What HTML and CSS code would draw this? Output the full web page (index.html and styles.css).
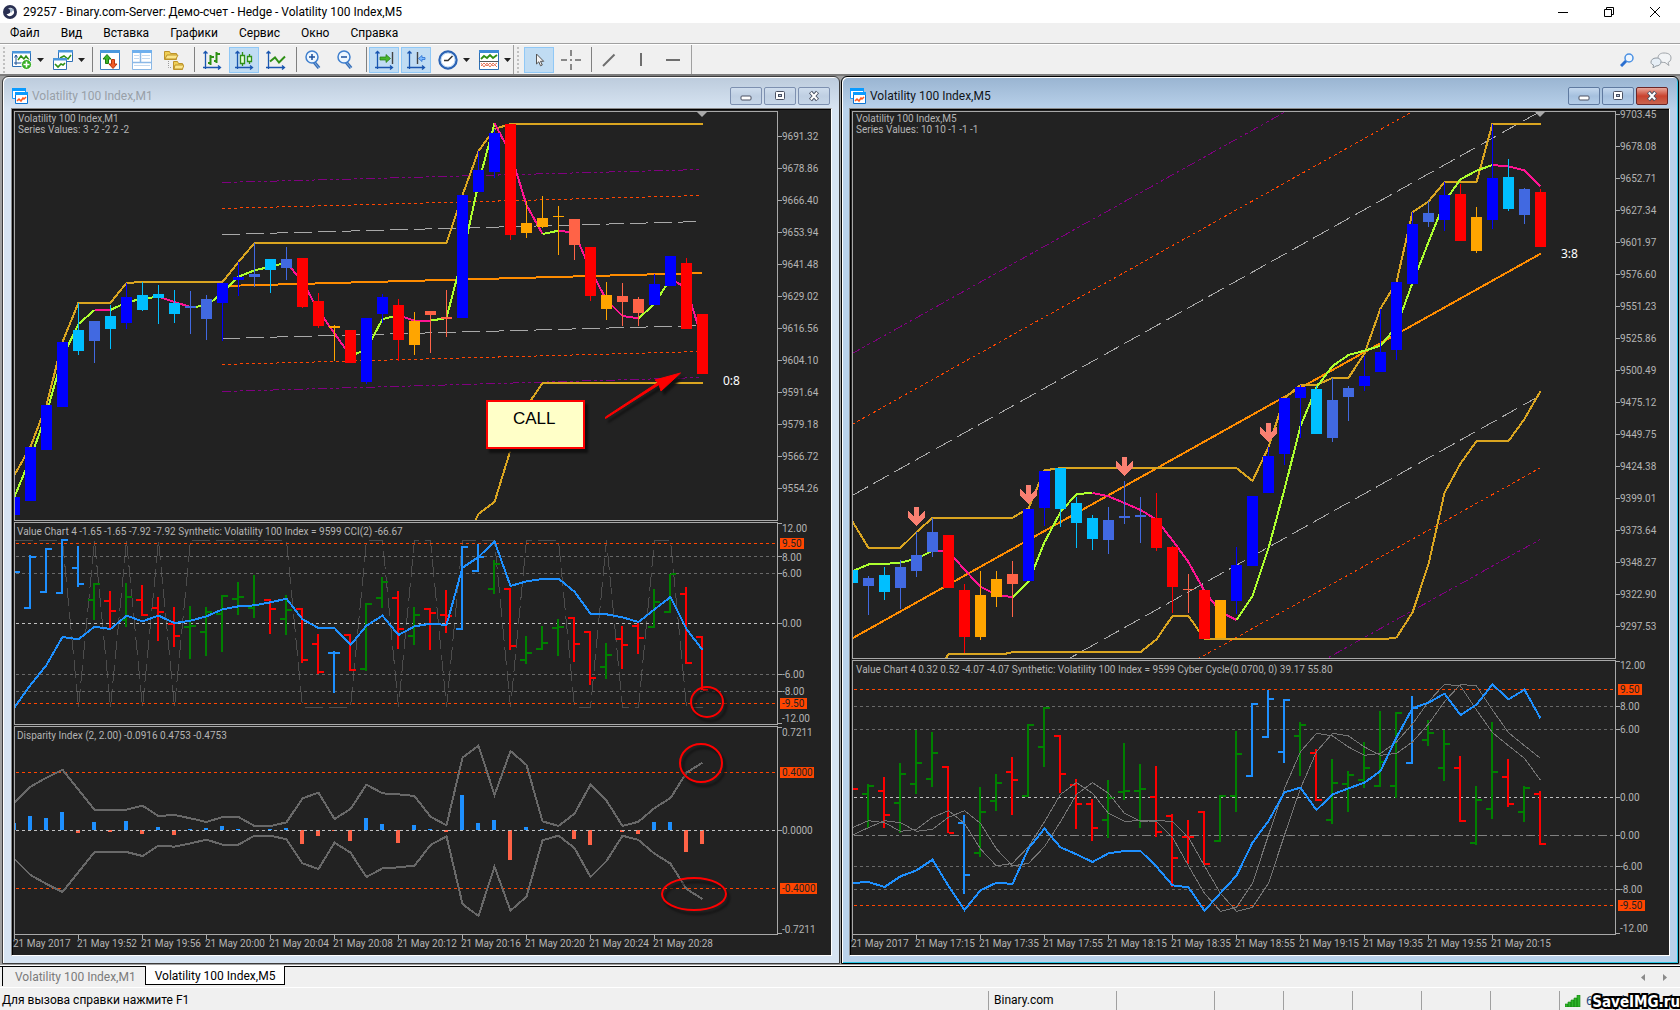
FILE: index.html
```html
<!DOCTYPE html>
<html lang="ru">
<head>
<meta charset="utf-8">
<title>29257 - Binary.com-Server: Демо-счет - Hedge - Volatility 100 Index,M5</title>
<link rel="stylesheet" href="styles.css">
</head>
<body>
<svg class="defs" aria-hidden="true">
  <symbol id="i-chartwin" viewBox="0 0 16 16">
    <path d="M0.5 0.5h13v10h-13z" fill="#fff" stroke="#1c9cff"/><path d="M0 0h14v3H0z" fill="#0a9bff"/>
    <path d="M3.500 4.500h12v11h-12z" fill="#fff" stroke="#0b74d4"/><path d="M3 4h13v3H3z" fill="#0a9bff"/>
    <path d="M5 13l2-2 2 2 2-3 1 1 2-2" fill="none" stroke="#ff5a1e" stroke-width="1.500"/>
  </symbol>
  <symbol id="i-min" viewBox="0 0 12 12"><rect x="1" y="6" width="10" height="4" rx="1" fill="#fff" stroke="#4a5163"/></symbol>
  <symbol id="i-max" viewBox="0 0 12 12"><rect x="1.500" y="1.500" width="9" height="8" rx="1" fill="#fff" stroke="#4a5163"/><rect x="4.500" y="4.500" width="3" height="2" fill="#b8c8dc" stroke="#4a5163"/></symbol>
  <symbol id="i-x" viewBox="0 0 12 12"><path d="M2.500 2l7 8M9.500 2l-7 8" stroke="#4a5163" stroke-width="4"/><path d="M2.800 2.500l6.400 7M9.200 2.500l-6.400 7" stroke="#fff" stroke-width="2"/></symbol>
  <symbol id="i-caret" viewBox="0 0 7 4"><path d="M0 0h7L3.500 4z" fill="#222"/></symbol>
</svg>

<header class="titlebar">
  <svg class="logo" width="14" height="14" viewBox="0 0 14 14"><circle cx="7" cy="7" r="7" fill="#2a3052"/><path d="M3.500 9A4 4 0 1 0 5 3.500C8 4 8.500 7 6 8.500 5 9 4 9 3.500 9z" fill="#fff"/><path d="M6 3l5 1-3 4z" fill="#9fb3c8"/></svg>
  <h1>29257 - Binary.com-Server: Демо-счет - Hedge - Volatility 100 Index,M5</h1>
  <div class="sysbtns">
    <button aria-label="Свернуть"><svg width="12" height="12"><path d="M1 6.500h10" stroke="#000"/></svg></button>
    <button aria-label="Восстановить"><svg width="12" height="12" fill="none" stroke="#000"><path d="M1.500 3.500h7v7h-7zM3.500 3.500v-2h7v7h-2"/></svg></button>
    <button aria-label="Закрыть"><svg width="12" height="12"><path d="M1 1l10 10M11 1L1 11" stroke="#000"/></svg></button>
  </div>
</header>

<nav class="menu">
  <a href="#">Файл</a><a href="#">Вид</a><a href="#">Вставка</a><a href="#">Графики</a><a href="#">Сервис</a><a href="#">Окно</a><a href="#">Справка</a>
</nav>

<div class="toolbar">
  <div class="bar">
    <i class="grip"></i>
    <button class="drop" aria-label="Новый график"><svg width="20" height="20" viewBox="0 0 20 20"><path d="M.5 1.500h18v15H.5z" fill="#fff" stroke="#2d6fb5"/><path d="M0 1h19v2.500H0z" fill="#4a97dc"/><path d="M4 5v10M2 13h10M2.500 7.500L4 5l1.500 2.500" fill="none" stroke="#1a5296"/><path d="M6 10l3-4 3 3 2-3 3 4" fill="none" stroke="#2f9016" stroke-width="1.500"/><circle cx="14.500" cy="14.500" r="5" fill="#35ad22" stroke="#fff"/><path d="M14.500 11.500v6M11.500 14.500h6" stroke="#fff" stroke-width="1.600"/></svg><svg width="7" height="4"><use href="#i-caret"/></svg></button>
    <button class="drop" aria-label="Профили"><svg width="20" height="20" viewBox="0 0 20 20"><path d="M5.500.5h14v11h-14z" fill="#fff" stroke="#2d6fb5"/><path d="M5 0h15v2.500H5z" fill="#4a97dc"/><path d="M7 8l4-2 4 3 3-4" fill="none" stroke="#2f9016" stroke-width="1.500"/><path d="M.5 8.500h13v11H.5z" fill="#fff" stroke="#2d6fb5"/><path d="M0 8h14v2.500H0z" fill="#4a97dc"/><path d="M2 14l3 3 3-3 2 1 2-2" fill="none" stroke="#2f9016" stroke-width="1.700"/></svg><svg width="7" height="4"><use href="#i-caret"/></svg></button>
    <i class="sep"></i>
    <button aria-label="Обзор рынка"><svg width="20" height="20" viewBox="0 0 20 20"><path d="M.5.5h19v19H.5z" fill="#fff" stroke="#3c7fc2"/><path d="M0 0h20v3H0z" fill="#4a97dc"/><path d="M7 4.500l4 4.500H8.500v4.500h-3V9H3z" fill="#3bb428" stroke="#1d7a10"/><path d="M13 18.500l4-4.500h-2.500V9.500h-3V14H9z" fill="#f25c27" stroke="#b8350c"/></svg></button>
    <button aria-label="Окно данных"><svg width="20" height="20" viewBox="0 0 20 20"><path d="M.5.5h19v19H.5z" fill="#fff" stroke="#8ab8e6"/><path d="M0 0h20v3H0z" fill="#6fb0ee"/><path d="M.5 12.500h19M8.500 3v9" stroke="#8ab8e6" stroke-width="1.500"/><path d="M2 5.500h5M2 8.500h5M10 5.500h8M10 8.500h8M2 15.500h16" stroke="#c4daf0"/></svg></button>
    <button aria-label="Навигатор"><svg width="20" height="20" viewBox="0 0 20 20"><path d="M.5 1.500h5l1 2h6v6H.5z" fill="#f0cf55" stroke="#bd932a"/><path d="M1 9l2-4h11l-2 4z" fill="#fbe68a" stroke="#bd932a"/><path d="M4.500 11v6.500H8" fill="none" stroke="#999" stroke-dasharray="1 1"/><path d="M9.500 11.500h4l1 2h4v6h-9z" fill="#f0cf55" stroke="#bd932a"/><path d="M10 19l1-4h9l-1.500 4z" fill="#fbe68a" stroke="#bd932a"/></svg></button>
    <i class="sep"></i>
    <button aria-label="Бары"><svg width="20" height="20" viewBox="0 0 20 20"><path d="M3.500 1v18M1 17.500h17M1.500 3.500l2-2 2 2M16 15.500l2.500 2-2.500 2" fill="none" stroke="#1a56b0" stroke-width="1.300"/><path d="M8.500 5v10M6 13h2.500M8.500 7H12M14.500 2v11M12 11h2.500M14.500 4H18" fill="none" stroke="#2f9016" stroke-width="2"/></svg></button>
    <button class="on" aria-label="Свечи"><svg width="20" height="20" viewBox="0 0 20 20"><path d="M3.500 1v18M1 17.500h17M1.500 3.500l2-2 2 2M16 15.500l2.500 2-2.500 2" fill="none" stroke="#1a56b0" stroke-width="1.300"/><path d="M8.500 2v14M15.500 4v10" stroke="#2f9016" stroke-width="1.300"/><path d="M6.500 5.500h4v8h-4zM13.500 6.500h4v5h-4z" fill="#e6ffd8" stroke="#2f9016" stroke-width="1.300"/></svg></button>
    <button aria-label="Линия"><svg width="20" height="20" viewBox="0 0 20 20"><path d="M2.500 1v18M0 17.500h18M.5 3.500l2-2 2 2M16 15.500l2.500 2-2.500 2" fill="none" stroke="#1a56b0" stroke-width="1.300"/><path d="M4 11.500l5-4 4 5 6-6" fill="none" stroke="#2f9016" stroke-width="2"/></svg></button>
    <i class="sep"></i>
    <button aria-label="Увеличить"><svg width="20" height="20" viewBox="0 0 20 20"><path d="M10 12l5 6" stroke="#3a6fb5" stroke-width="3.500"/><path d="M10 12l5 6" stroke="#7fb0e8" stroke-width="1"/><circle cx="8" cy="7" r="6" fill="#eef7ff" stroke="#3f7fce" stroke-width="1.500"/><path d="M8 4v6M5 7h6" stroke="#1b4f9c" stroke-width="1.500"/></svg></button>
    <button aria-label="Уменьшить"><svg width="20" height="20" viewBox="0 0 20 20"><path d="M10 12l5 6" stroke="#3a6fb5" stroke-width="3.500"/><path d="M10 12l5 6" stroke="#7fb0e8" stroke-width="1"/><circle cx="8" cy="7" r="6" fill="#eef7ff" stroke="#3f7fce" stroke-width="1.500"/><path d="M5 7h6" stroke="#1b4f9c" stroke-width="1.500"/></svg></button>
    <i class="sep"></i>
    <button class="on" aria-label="Автопрокрутка"><svg width="20" height="20" viewBox="0 0 20 20"><path d="M3.500 1v18M1 17.500h17M1.500 3.500l2-2 2 2M16 15.500l2.500 2-2.500 2" fill="none" stroke="#1a56b0" stroke-width="1.300"/><path d="M18.500 2v12" stroke="#444" stroke-width="1.400"/><path d="M6 7h6V4.500L16.500 8.500 12 12.500V10H6z" fill="#46b52d" stroke="#237a12" stroke-width=".7"/></svg></button>
    <button class="on" aria-label="Сдвиг графика"><svg width="20" height="20" viewBox="0 0 20 20"><path d="M3.500 1v18M1 17.500h17M1.500 3.500l2-2 2 2M16 15.500l2.500 2-2.500 2" fill="none" stroke="#1a56b0" stroke-width="1.300"/><path d="M11.500 2v12" stroke="#444" stroke-width="1.400"/><path d="M19 7.500h-3V5.500l-3.500 3 3.500 3v-2h3z" fill="#7fbcff" stroke="#2a6fd0" stroke-width=".8"/></svg></button>
    <button class="drop" aria-label="Периоды"><svg width="20" height="20" viewBox="0 0 20 20"><circle cx="10" cy="10" r="8.500" fill="#fff" stroke="#2b63b4" stroke-width="2.400"/><circle cx="10" cy="10" r="7" fill="none" stroke="#b5d4f4"/><path d="M14.500 6L10 10.500H6" fill="none" stroke="#333" stroke-width="1.500"/></svg><svg width="7" height="4"><use href="#i-caret"/></svg></button>
    <button class="drop" aria-label="Шаблоны"><svg width="20" height="20" viewBox="0 0 20 20"><path d="M.5.5h19v19H.5z" fill="#fff" stroke="#2d6fb5"/><path d="M0 0h20v3H0z" fill="#3d8ad6"/><path d="M2 9l3-3 3 2 3-3 3 3 4-3" fill="none" stroke="#2f9016" stroke-width="1.800"/><path d="M.5 11.500h19" stroke="#555"/><path d="M2 16l3-3 3 3 3-3 3 3 4-3M2 13l3 4 3-4 3 4 3-4 4 4" fill="none" stroke="#e8775c"/></svg><svg width="7" height="4"><use href="#i-caret"/></svg></button>
  </div>
  <div class="bar">
    <i class="grip"></i>
    <button class="on" aria-label="Курсор"><svg width="20" height="20" viewBox="0 0 20 20"><path d="M7.500 4v10l2.300-2.200 1.700 4 1.800-.8-1.800-3.700h3.200z" fill="#f4f4f4" stroke="#555"/></svg></button>
    <button aria-label="Перекрестие"><svg width="20" height="20" viewBox="0 0 20 20"><path d="M10 0v6M10 14v6M0 10h6M14 10h6M9 10h2" stroke="#666" stroke-width="1.500"/></svg></button>
    <i class="sep"></i>
    <button aria-label="Трендовая линия"><svg width="20" height="20" viewBox="0 0 20 20"><path d="M4 16L15.500 4.500" stroke="#6e6e6e" stroke-width="2"/></svg></button>
    <button aria-label="Вертикальная линия"><svg width="20" height="20" viewBox="0 0 20 20"><path d="M10 3v13" stroke="#6e6e6e" stroke-width="2"/></svg></button>
    <button aria-label="Горизонтальная линия"><svg width="20" height="20" viewBox="0 0 20 20"><path d="M3 10h14" stroke="#6e6e6e" stroke-width="2"/></svg></button>
  </div>
  <div class="bar-end">
    <button aria-label="Поиск"><svg width="14" height="14" viewBox="0 0 14 14"><circle cx="9" cy="5" r="4" fill="#eef6ff" stroke="#4a90e2" stroke-width="1.500"/><path d="M6 8l-5 5" stroke="#2a6fd0" stroke-width="3"/></svg></button>
    <button aria-label="Чат"><svg width="22" height="16" viewBox="0 0 22 16"><path d="M14 1c5 0 7 2 7 5s-2 4-3 4.500l1 3-4-3c-5 0-7-1.500-7-4.500s2-5 6-5z" fill="#f2f4f6" stroke="#a0a5aa"/><path d="M6 6c4 0 5 2 5 4s-2 4-5 4l-3 2 .500-3C1 12 1 11 1 10c0-2 2-4 5-4z" fill="#e6eef6" stroke="#9098a0"/></svg></button>
  </div>
</div>

<main class="mdi">
  <section class="win">
    <header>
      <svg width="16" height="16"><use href="#i-chartwin"/></svg><h2>Volatility 100 Index,M1</h2>
      <button aria-label="Свернуть"><svg width="12" height="12"><use href="#i-min"/></svg></button><button aria-label="Развернуть"><svg width="12" height="12"><use href="#i-max"/></svg></button><button aria-label="Закрыть"><svg width="12" height="12"><use href="#i-x"/></svg></button>
    </header>
    <div class="client" id="m1"></div>
  </section>
  <section class="win active">
    <header>
      <svg width="16" height="16"><use href="#i-chartwin"/></svg><h2>Volatility 100 Index,M5</h2>
      <button aria-label="Свернуть"><svg width="12" height="12"><use href="#i-min"/></svg></button><button aria-label="Развернуть"><svg width="12" height="12"><use href="#i-max"/></svg></button><button class="close" aria-label="Закрыть"><svg width="12" height="12"><use href="#i-x"/></svg></button>
    </header>
    <div class="client" id="m5"></div>
  </section>
</main>

<nav class="tabs">
  <a href="#m1">Volatility 100 Index,M1</a><a href="#m5" class="current">Volatility 100 Index,M5</a>
  <div class="scroll"><button aria-label="Назад"><svg width="4" height="7"><path d="M4 0v7L0 3.500z" fill="#8a8a8a"/></svg></button><button aria-label="Вперед"><svg width="4" height="7"><path d="M0 0v7l4-3.500z" fill="#8a8a8a"/></svg></button></div>
</nav>

<footer class="status">
  <span class="hint">Для вызова справки нажмите F1</span>
  <span class="c1">Binary.com</span><span class="c2"></span><span class="c3"></span><span class="c3"></span><span class="c3"></span><span class="c3"></span><span class="c3"></span>
  <span class="net"><svg width="16" height="12" viewBox="0 0 16 12"><path d="M0 9h3v3H0zM3 7h3v5H3zM6 5h3v7H6zM9 3h3v9H9zM12 0h3v12h-3z" fill="#2eb52a" stroke="#14850f" stroke-width=".6"/></svg>67/0 Kb</span>
  <b class="mark">SaveIMG.ru</b>
</footer>
<script src="charts.js"></script>
</body>
</html>
```
FILE: styles.css
```css
* { box-sizing: border-box; }
body {
  margin: 0;
  min-height: 100vh;
  display: flex;
  flex-direction: column;
  background: #f0f0f0;
  color: #000;
  font: 12px/16px Roboto, "Noto Sans", sans-serif;
}
button { padding: 0; border: 0; background: none; font: inherit; display: flex; align-items: center; justify-content: center; }
h1, h2 { margin: 0; font-size: 12px; font-weight: 400; }
a { color: inherit; text-decoration: none; }
svg { display: block; flex: none; }
.defs { width: 0; height: 0; position: absolute; }

.titlebar { display: flex; align-items: center; height: 23px; padding-left: 3px; gap: 6px; background: #fff; }
.titlebar h1 { flex: 1; }
.sysbtns { display: flex; margin-right: 2px; }
.sysbtns button { width: 46px; height: 20px; }

.menu { display: flex; gap: 21px; height: 21px; padding: 2px 10px; border-bottom: 1px solid #a0a0a0; }

.toolbar { display: flex; height: 32px; border-top: 1px solid #fff; border-bottom: 2px solid #7c7c7c; }
.bar { display: flex; align-items: center; gap: 2px; border-right: 1px solid #a0a0a0; }
.bar + .bar { padding-right: 3px; }
.bar + .bar .grip { margin-right: 3px; }
.grip { width: 5px; height: 26px; border-right: 2px dotted #c0c0c0; }
.sep { width: 4px; height: 25px; border-right: 1px solid #808080; }
.bar button { width: 30px; height: 26px; border: 1px solid transparent; }
.bar button.drop { width: 39px; gap: 5px; justify-content: flex-end; padding-right: 1px; }
.bar button.on { background: #c0dcf3; border-color: #90c8f6; }
.bar-end { display: flex; align-items: center; gap: 16px; margin-left: auto; padding-right: 8px; }

.mdi { flex: 1; display: grid; grid-template-columns: 1fr 1fr; gap: 1px; padding: 0 1px 1px 2px; background: #a0a0a0; }
.win {
  display: flex;
  flex-direction: column;
  min-width: 0;
  padding: 0 7px 7px 8px;
  border: 1px solid #3c3c3c;
  border-radius: 6px 6px 0 0;
  background: linear-gradient(#bccbdc, #d7e4f2 32px);
  box-shadow: inset 1px 1px #fff;
}
.win.active {
  padding-left: 7px;
  padding-right: 8px;
  border-color: #000;
  background: linear-gradient(#99b4d1, #b9d1ea 32px);
  box-shadow: inset 1px 1px #fff, inset -1px -1px #27c4e4;
}
.win header { display: flex; align-items: center; gap: 2px; height: 31px; padding: 6px 2px 0 1px; }
.win header h2 { flex: 1; padding-left: 2px; color: #98a0a8; }
.win.active header h2 { color: #101418; }
.win header button { width: 32px; height: 18px; border: 1px solid #7d90b0; border-radius: 2px; background: linear-gradient(#cfdded, #bfcfe2 50%, #c6d6e8); }
.win.active header button { border-color: #5f7aa0; background: linear-gradient(#c4d8ee, #a5c0de 50%, #b4cde8); }
.win.active header button.close { border-color: #6b2626; background: linear-gradient(#e8a79a, #c9432f 50%, #c8654f); }

.client {
  flex: 1;
  display: flex;
  flex-direction: column;
  gap: 1px;
  overflow: hidden;
  padding: 2px 0 0 2px;
  border: 1px solid;
  border-color: #888 #fff #fff #888;
  box-shadow: inset 1px 1px #000;
  background: #222;
}
.client .times { margin-top: -1px; }

.pane { font: 10px Roboto, sans-serif; fill: #b4b4b4; overflow: visible; }
.plot { shape-rendering: crispEdges; overflow: hidden; }
.frame { fill: none; stroke: #a9a9a9; }
.line { fill: none; stroke-width: 2; }
.thin { fill: none; stroke-width: 1; }
.dot { stroke-dasharray: 3 3; }
.dash { stroke-dasharray: 18 6; }
.dashdot { stroke-dasharray: 9 3 3 3 3 3; }
.badge { fill: #ff4500; }
.badge-text { fill: #222; }
.note { font: 12px "Noto Sans", sans-serif; fill: #fff; }
.call { font: 17px "Liberation Sans", sans-serif; fill: #000; }
.ring { fill: none; stroke: #f00; stroke-width: 2; }
.shadow { filter: drop-shadow(3px 4px 1px #111); }

.tabs { display: flex; height: 22px; margin-top: 1px; padding: 0 0 0 2px; border-top: 1px solid #000; border-bottom: 1px solid #fff; box-shadow: 0 -1px #fff; }
.tabs a { height: 19px; padding: 2px 9px 0 12px; border-left: 1px solid #000; color: #7a7a7a; line-height: 16px; }
.tabs a.current { padding: 2px 9px 0; margin-top: -1px; border: 1px solid #000; border-top: 0; background: #fff; color: #000; }
.scroll { display: flex; gap: 18px; margin-left: auto; padding-right: 13px; }

.status { position: relative; display: flex; height: 22px; padding: 3px 0 0 2px; line-height: 18px; }
.status .hint { flex: 1; }
.status span + span { padding-left: 5px; border-left: 1px solid #a0a0a0; }
.status .c1 { width: 128px; }
.status .c2 { width: 98px; }
.status .c3 { width: 69px; }
.status .net { display: flex; align-items: center; gap: 5px; width: 121px; color: #1c4a84; }
.mark {
  position: absolute;
  right: 0;
  bottom: -1px;
  color: #fff;
  font: bold 15px/18px "DejaVu Sans Condensed", "DejaVu Sans", sans-serif;
  -webkit-text-stroke: 4px #000;
  paint-order: stroke fill;
}
```
FILE: charts.js
```js
const NS = 'http://www.w3.org/2000/svg';
const C = {
  B: '#0000ff', S: '#00bfff', R: '#4169e1', r: '#ff0000', o: '#ffa500', t: '#ff6347',
  G: '#008000', D: '#1e90ff', gold: '#daa520', trend: '#ff8c00', level: '#ff4500',
  dim: '#696969', silver: '#c0c0c0', purple: '#800080', lime: '#adff2f', pink: '#ff1493',
};
const STEP = 16;

function el(parent, tag, attrs, text) {
  const node = document.createElementNS(NS, tag);
  for (const k in attrs) node.setAttribute(k, attrs[k]);
  if (text !== undefined) node.textContent = text;
  parent.append(node);
  return node;
}

// One chart pane: a framed plot with a price scale to its right.
class Pane {
  constructor(host, left, top, height, origin, unit) {
    Object.assign(this, { left, top, height });
    this.y = v => origin + v / unit;
    this.svg = el(host, 'svg', { class: 'pane', width: 817, height, viewBox: `${left} ${top} 817 ${height}` });
    this.plot = el(this.svg, 'svg', {
      class: 'plot', x: left + 1, y: top + 1, width: 762, height: height - 2,
      viewBox: `${left + 1} ${top + 1} 762 ${height - 2}`,
    });
    el(this.svg, 'rect', { class: 'frame', x: left + .5, y: top + .5, width: 763, height: height - 1 });
  }
  x(i) { return this.left + STEP * i; }
  box(x, y, w, h, fill) { el(this.plot, 'rect', { x, y, width: w, height: h, fill }); }
  raw(points, stroke, cls) { el(this.plot, 'polyline', { class: cls, points: points.map(p => p.join()).join(' '), stroke }); }
  line(points, stroke, cls = 'line') {
    this.raw(points.map(([i, v]) => [this.x(i) + .5, this.y(v)]), stroke, cls);
  }
  series(values, stroke, cls) { this.line(values.map((v, i) => [i, v]), stroke, cls); }
  // Moving average whose colour switches at the given bar indexes.
  average(values, turns) {
    for (let k = 0; k + 1 < turns.length; k++) {
      const pts = [];
      for (let i = turns[k]; i <= turns[k + 1]; i++) pts.push([i, values[i]]);
      this.line(pts, k % 2 ? C.pink : C.lime);
    }
  }
  candle(i, color, open, close, high = open, low = close) {
    const Y = v => Math.round(this.y(v)), x = this.x(i);
    this.box(x, Y(high), 1, Y(low) - Y(high), C[color]);
    this.box(x - 5, Y(open), 11, Math.max(1, Y(close) - Y(open)), C[color]);
  }
  bar(i, color, high, low, open, close) {
    const Y = v => Math.round(this.y(v)), x = this.x(i);
    this.box(x - 1, Y(high), 2, Y(low) - Y(high), C[color]);
    this.box(x - 6, Y(open) - 1, 5, 2, C[color]);
    this.box(x + 1, Y(close) - 1, 5, 2, C[color]);
  }
  level(v, stroke, cls = 'dot') {
    const y = Math.floor(this.y(v)) + .5;
    this.raw([[this.left + 2, y], [this.left + 763, y]], stroke, 'thin ' + cls);
  }
  label(v, text, tick = v) {
    const y = Math.round(this.y(v)), ty = Math.floor(this.y(tick)) + .5;
    el(this.svg, 'path', { d: `M${this.left + 764} ${ty}h4`, stroke: '#a9a9a9' });
    el(this.svg, 'text', { x: this.left + 768, y: y + 4 }, text);
  }
  badge(v, text, width) {
    const y = Math.round(this.y(v));
    el(this.svg, 'rect', { class: 'badge', x: this.left + 766, y: y - 5, width, height: 11 });
    el(this.svg, 'text', { class: 'badge-text', x: this.left + 768, y: y + 4 }, text);
  }
  title(x, y, text) { el(this.svg, 'text', { x, y }, text); }
  ring(cx, cy, rx, ry) { el(this.svg, 'ellipse', { class: 'ring shadow', cx, cy, rx, ry }); }
  marker(x) { el(this.svg, 'path', { d: `M${x - 5} ${this.top + 1}h10l-5 5z`, fill: '#a9a9a9' }); }
}

function timeAxis(host, left, labels) {
  const svg = el(host, 'svg', { class: 'pane times', width: 817, height: 20, viewBox: `${left} 0 817 20` });
  labels.forEach((t, k) => {
    el(svg, 'path', { d: `M${left + 64 * k + .5} 0v4`, stroke: '#a9a9a9' });
    el(svg, 'text', { x: left + 64 * k - 1, y: 12 }, '21 May ' + t);
  });
}

/* ---------- M1 window ---------- */
const m1 = document.getElementById('m1');

const p1 = new Pane(m1, 14, 111, 410, 100, 3);
const channel = (y0, y1, stroke, cls) => p1.raw([[p1.x(13), y0], [702, y1]], stroke, cls);
channel(182.5, 169.5, C.purple, 'thin dashdot');
channel(208.5, 195.5, C.level, 'thin dot');
channel(234.5, 221.5, '#a9a9a9', 'thin dash');
channel(338.5, 325.5, '#a9a9a9', 'thin dash');
channel(364.5, 351.5, C.level, 'thin dot');
channel(391.5, 377.5, C.purple, 'thin dashdot');
p1.line([[13, 558], [43, 519]], C.trend);
p1.line([[0, 1125], [1, 1040], [2, 915], [3, 726], [4, 608], [6, 608], [7, 549], [8, 546], [13, 546], [14, 486], [15, 429],
  [27, 429], [28, 285], [29, 153], [30, 87], [31, 72], [43, 72]], C.gold);
p1.line([[28.8, 1262], [29, 1242], [30, 1206], [31, 1050], [32, 920], [33, 849], [43, 849]], C.gold);
p1.average([1190, 1075, 940, 770, 672, 630, 630, 607, 596, 590, 606, 621, 618, 578, 530, 511, 500, 488, 545, 632, 700, 768, 748,
  657, 646, 662, 662, 654, 470, 250, 70, 160, 315, 402, 392, 398, 510, 600, 648, 655, 612, 535, 565, 720],
  [0, 5, 6, 9, 11, 17, 21, 24, 26, 30, 33, 34, 39, 41, 43]);
[
  ['B', 1191, 1245], ['B', 1041, 1204], ['B', 915, 1049], ['B', 726, 921], ['S', 690, 753, 608, 765], ['R', 663, 723, 663, 789],
  ['S', 648, 687, 615, 747], ['B', 591, 670, 548, 687], ['S', 585, 630, 545, 633], ['S', 582, 594, 555, 672],
  ['S', 609, 642, 570, 669], ['R', 618, 624, 573, 702], ['R', 597, 657, 585, 720], ['B', 548, 609, 548, 723],
  ['B', 532, 540, 486, 588], ['R', 522, 531, 429, 561], ['S', 477, 510, 477, 579], ['R', 477, 504, 441, 540],
  ['r', 474, 621, 474, 624], ['r', 603, 678, 579, 684], ['o', 678, 684, 675, 783], ['r', 690, 789], ['B', 654, 846, 654, 852],
  ['B', 591, 642, 582, 669], ['r', 615, 720, 597, 783], ['o', 663, 735, 636, 765], ['t', 633, 645, 633, 759],
  ['t', 651, 657, 570, 711], ['B', 285, 653], ['B', 210, 276, 153, 276], ['B', 99, 215, 87, 234], ['r', 72, 405, 72, 420],
  ['o', 369, 399, 302, 414], ['o', 354, 381, 288, 384], ['o', 348, 351, 318, 465], ['t', 357, 435, 357, 480],
  ['r', 441, 588, 441, 603], ['o', 585, 627, 546, 660], ['t', 588, 606, 549, 678], ['t', 597, 639, 591, 678],
  ['B', 552, 615, 522, 615], ['B', 468, 558], ['r', 489, 687, 474, 687], ['r', 642, 822],
].forEach((c, i) => p1.candle(i, ...c));
for (let k = 0; k < 12; k++) p1.label(109 + 96 * k, (9691.32 - 12.46 * k).toFixed(2));
p1.title(18, 122, 'Volatility 100 Index,M1');
p1.title(18, 133, 'Series Values: 3 -2 -2 2 -2');
p1.marker(702);
el(p1.svg, 'text', { class: 'note', x: 723, y: 385 }, '0:8');
el(p1.svg, 'rect', { class: 'shadow', x: 487, y: 401, width: 97, height: 47, fill: '#ffffc8', stroke: '#f00', 'stroke-width': 2 });
el(p1.svg, 'text', { class: 'call', x: 513, y: 424 }, 'CALL');
el(p1.svg, 'path', { class: 'shadow', d: 'M605.5 418.5L659 384.5 661 391 680.5 373 655 380 658 382.5 605.5 417z', fill: '#f00', stroke: '#f00', 'stroke-width': 1 });

const p2 = new Pane(m1, 14, 522, 203, 515, 3);
p2.series([0, 0, 0, 0, 1, 0, 1, 0, 1, 0, 1, 0, 0, 0, 0, 0, 0, 0, 1, 1, 1, 1, 0, 0, 1, 0, 0, 1, 0, 0, 0, 1, 0, 0, 0, 1, 1, 0, 1, 1, 0, 0, 1, 1]
  .map(v => v ? 577 : 76), '#4c4c4c', 'thin dash');
[85, 565].forEach(v => p2.level(v, C.level));
[124, 175, 478, 529].forEach(v => p2.level(v, C.dim));
p2.level(325, C.silver);
[
  ['D', 171, 171, 171, 171], ['D', 120, 281, 279, 126], ['D', 99, 233, 231, 101], ['D', 72, 236, 234, 74], ['D', 93, 217, 158, 207],
  ['G', 204, 314, 255, 207], ['r', 228, 342, 258, 288], ['G', 205, 336, 316, 246], ['r', 210, 302, 255, 300],
  ['r', 246, 378, 279, 291], ['r', 276, 396, 327, 363], ['G', 273, 432, 336, 333], ['G', 276, 423, 351, 291],
  ['G', 240, 411, 297, 243], ['G', 201, 300, 252, 246], ['G', 180, 309, 279, 270], ['r', 253, 357, 255, 282],
  ['G', 240, 360, 312, 285], ['r', 280, 444, 282, 435], ['r', 357, 477, 387, 471], ['D', 408, 534, 415, 413],
  ['r', 358, 467, 360, 465], ['G', 265, 467, 462, 267], ['G', 186, 279, 249, 201], ['r', 228, 402, 249, 342],
  ['G', 276, 390, 363, 300], ['r', 280, 405, 282, 294], ['r', 225, 353, 300, 302], ['D', 93, 344, 342, 96],
  ['D', 87, 170, 168, 126], ['G', 135, 237, 222, 147], ['r', 219, 405, 222, 393], ['G', 363, 446, 435, 414],
  ['G', 333, 405, 402, 384], ['G', 312, 423, 339, 336], ['r', 306, 441, 309, 387], ['r', 348, 510, 351, 489],
  ['G', 384, 492, 456, 420], ['r', 333, 462, 372, 390], ['r', 325, 417, 333, 369], ['G', 222, 338, 336, 261],
  ['G', 176, 293, 291, 177], ['r', 216, 446, 237, 444], ['r', 364, 525, 366, 524],
].forEach((b, i) => p2.bar(i, ...b));
p2.series([577, 510, 450, 366, 373, 335, 342, 302, 319, 302, 324, 317, 304, 283, 274, 271, 262, 251, 313, 339, 339, 390, 332, 302,
  360, 334, 326, 330, 158, 126, 79, 213, 199, 192, 191, 230, 296, 298, 307, 321, 283, 246, 342, 405], C.D, 'line');
p2.label(38, '12.00', 25); p2.badge(85, '9.50', 24); p2.label(125, '8.00'); p2.label(175, '6.00'); p2.label(324, '0.00');
p2.label(478, '-6.00'); p2.label(529, '-8.00'); p2.badge(565, '-9.50', 27); p2.label(610, '-12.00', 625);
p2.title(17, 535, 'Value Chart 4 -1.65 -1.65 -7.92 -7.92 Synthetic: Volatility 100 Index = 9599 CCI(2) -66.67');
p2.ring(707, 702, 16, 15);

const p3 = new Pane(m1, 14, 726, 209, 515, 3);
const disparity = [863, 815, 788, 764, 824, 884, 884, 884, 872, 903, 900, 910, 921, 906, 906, 933, 933, 922, 850, 833, 912, 882, 809,
  835, 838, 843, 905, 931, 728, 692, 840, 708, 750, 919, 933, 896, 809, 857, 933, 920, 879, 849, 773, 743];
p3.level(772, C.level); p3.level(1120, C.level);
[924, 903, 909, 891, 954, 921, 951, 918, 957, 936, 960, 942, 939, 933, 942, 946, 942, 939, 987, 963, 948, 978, 909, 927, 984, 930, 942,
  951, 840, 924, 915, 1035, 936, 942, 946, 972, 990, 946, 951, 957, 921, 921, 1011, 987].forEach((v, i) => {
  const zero = 830, y = Math.round(p3.y(v));
  if (v !== 946) p3.box(p3.x(i) - 2, Math.min(y, zero), 4, Math.abs(y - zero), v < 946 ? C.D : C.t);
});
p3.level(946, C.silver);
p3.series(disparity, C.dim, 'line');
p3.series(disparity.map(v => 1895 - v), C.dim, 'line');
p3.label(650, '0.7211', 637); p3.badge(772, '0.4000', 34); p3.label(945, '0.0000'); p3.badge(1120, '-0.4000', 37); p3.label(1241, '-0.7211', 1255);
p3.title(17, 739, 'Disparity Index (2, 2.00) -0.0916 0.4753 -0.4753');
p3.ring(701, 763, 21, 19);
p3.ring(694, 894, 32, 16);
timeAxis(m1, 14, ['2017', '19:52', '19:56', '20:00', '20:04', '20:08', '20:12', '20:16', '20:20', '20:24', '20:28']);

/* ---------- M5 window ---------- */
const m5 = document.getElementById('m5');

const p4 = new Pane(m5, 852, 111, 548, 100, 2.8);
// Bars 0-24 were digitised on a slightly different grid; bring them to the pane's one.
const q = v => (70 + v / 2.6576 - 100) * 2.8;
[[353.7, C.purple, 'thin dashdot'], [424.5, C.level, 'thin dot'], [495.6, '#a9a9a9', 'thin dash'], [779.7, '#a9a9a9', 'thin dash'],
  [852, C.level, 'thin dot'], [923.5, C.purple, 'thin dashdot']].forEach(([y, c, k]) => p4.raw([[852, y], [1540, y - 384]], c, k));
p4.raw([[852, 638.5], [1541, 253.5]], C.trend, 'line');
p4.line([[0, q(1200)], [1, q(1270)], [3, q(1270)], [4, q(1228)], [5, q(1190)], [10, q(1190)], [10.6, q(1175)], [11, q(1165)],
  [12, q(1064)], [13, q(1058)], [24, q(1058)], [25, q(1092)], [26, 972], [27, 834], [28, 798], [29, 798], [30, 778], [31, 778],
  [32, 710], [33, 584], [34, 510], [35, 314], [36, 284], [37, 230], [39, 230], [40, 66], [43, 66]], C.gold);
p4.line([[5.8, q(1566)], [6, q(1552)], [9.5, q(1552)], [10, q(1547)], [18, q(1547)], [19, q(1513)], [20, q(1451)], [21, q(1451)],
  [22, q(1512)], [23, 1508], [33.5, 1508], [34, 1505], [35, 1435], [36, 1300], [37, 1100], [38, 1018], [39, 955], [41, 955],
  [42, 893], [43, 815]], C.gold);
p4.average([1332, 1314, 1313, 1309, 1299, 1278, 1279, 1328, 1373, 1395, 1401, 1360, 1255, 1175, 1127, 1124, 1133, 1151, 1169, 1195,
  1250, 1308, 1385, 1440, 1462, 1398].map(q).concat([1255, 1090, 913, 805, 745, 714, 702, 688, 635, 512, 398, 285, 222, 198, 182,
  186, 197, 242]), [0, 5, 10, 15, 24, 40, 43]);
[
  ['S', 1330, 1363], ['R', 1350, 1371, 1346, 1448], ['S', 1342, 1387, 1321, 1409], ['R', 1321, 1377, 1301, 1432],
  ['R', 1289, 1331, 1228, 1347], ['R', 1228, 1281, 1190, 1294], ['r', 1236, 1377], ['r', 1382, 1507, 1366, 1550],
  ['o', 1395, 1507, 1331, 1515], ['o', 1353, 1401, 1331, 1427], ['t', 1339, 1366, 1305, 1454], ['B', 1167, 1357],
  ['B', 1066, 1163, 1066, 1211], ['S', 1058, 1167, 1058, 1215], ['S', 1151, 1204, 1135, 1270], ['S', 1191, 1246, 1183, 1276],
  ['R', 1196, 1249, 1161, 1286], ['R', 1186, 1191, 1092, 1207], ['R', 1183, 1188, 1135, 1257], ['r', 1191, 1270, 1124, 1278],
  ['r', 1268, 1374, 1266, 1443], ['t', 1379, 1382, 1339, 1443], ['r', 1382, 1512], ['o', 1409, 1510], ['B', 1315, 1411, 1268, 1446],
].forEach(([c, ...v], i) => p4.candle(i, c, ...v.map(q)));
[
  ['B', 1109, 1305], ['B', 997, 1099, 972, 1099], ['B', 834, 991, 834, 1022], ['B', 804, 833, 797, 945], ['S', 809, 935, 801, 935],
  ['R', 840, 946, 778, 958], ['R', 806, 832, 800, 899], ['B', 773, 801, 717, 816], ['B', 706, 762, 584, 762],
  ['B', 510, 699, 510, 728], ['B', 348, 515, 314, 515], ['R', 316, 342, 284, 356], ['B', 266, 335, 230, 367],
  ['r', 263, 395, 235, 395], ['o', 328, 423, 300, 427], ['B', 218, 335, 66, 361], ['S', 216, 305, 165, 311],
  ['R', 249, 322, 246, 347], ['r', 258, 412, 249, 412],
].forEach((c, i) => p4.candle(i + 25, ...c));
[[916, 507], [1028, 485], [1124, 457], [1268, 423]].forEach(([x, y]) => el(p4.plot, 'path', {
  d: `M${x - 2} ${y}h5v9l6-5v6l-8.5 9-8.5-9v-6l6 5z`, fill: '#fa8072',
}));
for (let k = 0; k < 17; k++) p4.label(40 + 89.6 * k, (9703.45 - 25.37 * k).toFixed(2));
p4.title(856, 122, 'Volatility 100 Index,M5');
p4.title(856, 133, 'Series Values: 10 10 -1 -1 -1');
p4.marker(1540);
el(p4.svg, 'text', { class: 'note', x: 1561, y: 258 }, '3:8');

const p5 = new Pane(m5, 852, 660, 275, 650, 3);
[118, 766].forEach(v => p5.level(v, C.level));
[169, 238, 649, 718].forEach(v => p5.level(v, C.dim));
p5.level(442, C.silver);
p5.level(556, '#808080', 'dashdot');
[
  ['r', 417, 417, 417, 417], ['G', 402, 534, 432, 408], ['r', 381, 534, 423, 495], ['G', 339, 548, 459, 372], ['G', 240, 432, 402, 339],
  ['G', 246, 411, 387, 309], ['r', 349, 550, 351, 549], ['D', 495, 732, 519, 675], ['G', 411, 621, 609, 486],
  ['G', 372, 483, 453, 399], ['r', 321, 495, 366, 390], ['G', 223, 440, 438, 225], ['G', 171, 351, 291, 174],
  ['r', 256, 430, 258, 372], ['r', 387, 537, 405, 462], ['r', 447, 573, 462, 534], ['G', 390, 564, 510, 444],
  ['G', 279, 449, 426, 423], ['G', 342, 534, 423, 417], ['r', 348, 561, 441, 546], ['r', 492, 710, 498, 624],
  ['r', 510, 642, 561, 561], ['r', 484, 644, 486, 642], ['G', 436, 575, 573, 438], ['G', 243, 486, 438, 312],
  ['D', 160, 380, 378, 162], ['D', 120, 263, 261, 147], ['D', 148, 339, 306, 150], ['G', 216, 378, 258, 225],
  ['r', 297, 452, 309, 450], ['G', 327, 522, 510, 399], ['G', 363, 486, 402, 375], ['G', 276, 414, 390, 354],
  ['G', 183, 410, 408, 336], ['G', 186, 444, 408, 189], ['D', 138, 341, 339, 174], ['G', 210, 288, 270, 249],
  ['G', 240, 393, 354, 282], ['r', 318, 515, 354, 513], ['G', 408, 585, 579, 450], ['G', 216, 507, 477, 366],
  ['r', 327, 470, 381, 462], ['G', 408, 516, 486, 414], ['r', 423, 584, 432, 582],
].forEach((b, i) => p5.bar(i, ...b));
const cycle = [533, 512, 518, 544, 538, 502, 482, 520, 597, 648, 640, 590, 515, 433, 398, 430, 490, 514, 512, 514, 562, 648, 730, 784,
  772, 700, 555, 415, 305, 250, 258, 291, 316, 310, 276, 222, 155, 103, 108, 180, 248, 287, 325, 391];
p5.series(cycle, '#757575', 'thin');
p5.series([555, ...cycle.slice(0, 43)], '#757575', 'thin');
p5.series([699, 696, 711, 679, 661, 629, 708, 780, 721, 698, 702, 595, 536, 592, 613, 636, 610, 603, 603, 650, 706, 712, 782, 729, 677,
  578, 513, 427, 413, 480, 433, 415, 398, 363, 262, 175, 158, 131, 195, 164, 103, 148, 119, 205], C.D, 'line');
p5.label(46, '12.00', 34); p5.badge(118, '9.50', 24); p5.label(169, '8.00'); p5.label(238, '6.00'); p5.label(441, '0.00');
p5.label(556, '0.00'); p5.label(649, '-6.00'); p5.label(718, '-8.00'); p5.badge(766, '-9.50', 27); p5.label(835, '-12.00', 850);
p5.title(856, 673, 'Value Chart 4 0.32 0.52 -4.07 -4.07 Synthetic: Volatility 100 Index = 9599 Cyber Cycle(0.0700, 0) 39.17 55.80');
timeAxis(m5, 852, ['2017', '17:15', '17:35', '17:55', '18:15', '18:35', '18:55', '19:15', '19:35', '19:55', '20:15']);
```
